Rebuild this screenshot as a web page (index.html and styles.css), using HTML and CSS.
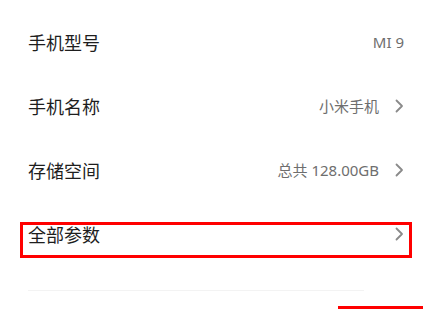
FILE: index.html
```html
<!DOCTYPE html>
<html lang="zh-CN">
<head>
<meta charset="utf-8">
<link rel="stylesheet" href="styles.css">
</head>
<body>
<div class="screen">
  <ul class="list">
    <li class="row">
      <span class="title">手机型号</span>
      <span class="value">MI 9</span>
    </li>
    <li class="row">
      <span class="title">手机名称</span>
      <span class="value">小米手机</span>
      <svg class="chev" viewBox="0 0 9 14" width="9" height="14"><path d="M1.5 1.5 L7 7 L1.5 12.5" fill="none" stroke="#8a8a8a" stroke-width="1.8" stroke-linecap="round" stroke-linejoin="round"/></svg>
    </li>
    <li class="row">
      <span class="title">存储空间</span>
      <span class="value">总共 128.00GB</span>
      <svg class="chev" viewBox="0 0 9 14" width="9" height="14"><path d="M1.5 1.5 L7 7 L1.5 12.5" fill="none" stroke="#8a8a8a" stroke-width="1.8" stroke-linecap="round" stroke-linejoin="round"/></svg>
    </li>
    <li class="row">
      <span class="title">全部参数</span>
      <span class="value"></span>
      <svg class="chev" viewBox="0 0 9 14" width="9" height="14"><path d="M1.5 1.5 L7 7 L1.5 12.5" fill="none" stroke="#8a8a8a" stroke-width="1.8" stroke-linecap="round" stroke-linejoin="round"/></svg>
    </li>
  </ul>
  <div class="sep"></div>
  <div class="mark-box"></div>
  <div class="mark-line"></div>
</div>
</body>
</html>
```

FILE: styles.css
```css
html, body {
  margin: 0;
  padding: 0;
  background: #ffffff;
}
.screen {
  position: relative;
  width: 423px;
  height: 329px;
  overflow: hidden;
  font-family: "Noto Sans", "Noto Sans CJK SC", sans-serif;
}
.list {
  list-style: none;
  margin: 0;
  padding: 10px 0 0 0;
}
.row {
  display: flex;
  align-items: center;
  height: 64px;
  padding: 0 19px 0 28px;
}
.title {
  flex: 1;
  font-family: "Noto Sans CJK SC", sans-serif;
  font-size: 18px;
  color: #1e1e1e;
  line-height: 1;
}
.value {
  font-family: "Noto Sans", "Noto Sans CJK SC", sans-serif;
  font-size: 15px;
  color: #6e6e6e;
  line-height: 1;
}
.chev {
  margin-left: 16px;
  display: block;
}
.sep {
  margin: 24px 0 0 28px;
  width: 336px;
  height: 1px;
  background: #f3f3f3;
}
.mark-box {
  position: absolute;
  left: 20px;
  top: 222px;
  width: 386px;
  height: 30px;
  border: 3px solid #ff0000;
}
.mark-line {
  position: absolute;
  left: 338px;
  top: 306px;
  width: 85px;
  height: 3px;
  background: #ff0000;
}
```
